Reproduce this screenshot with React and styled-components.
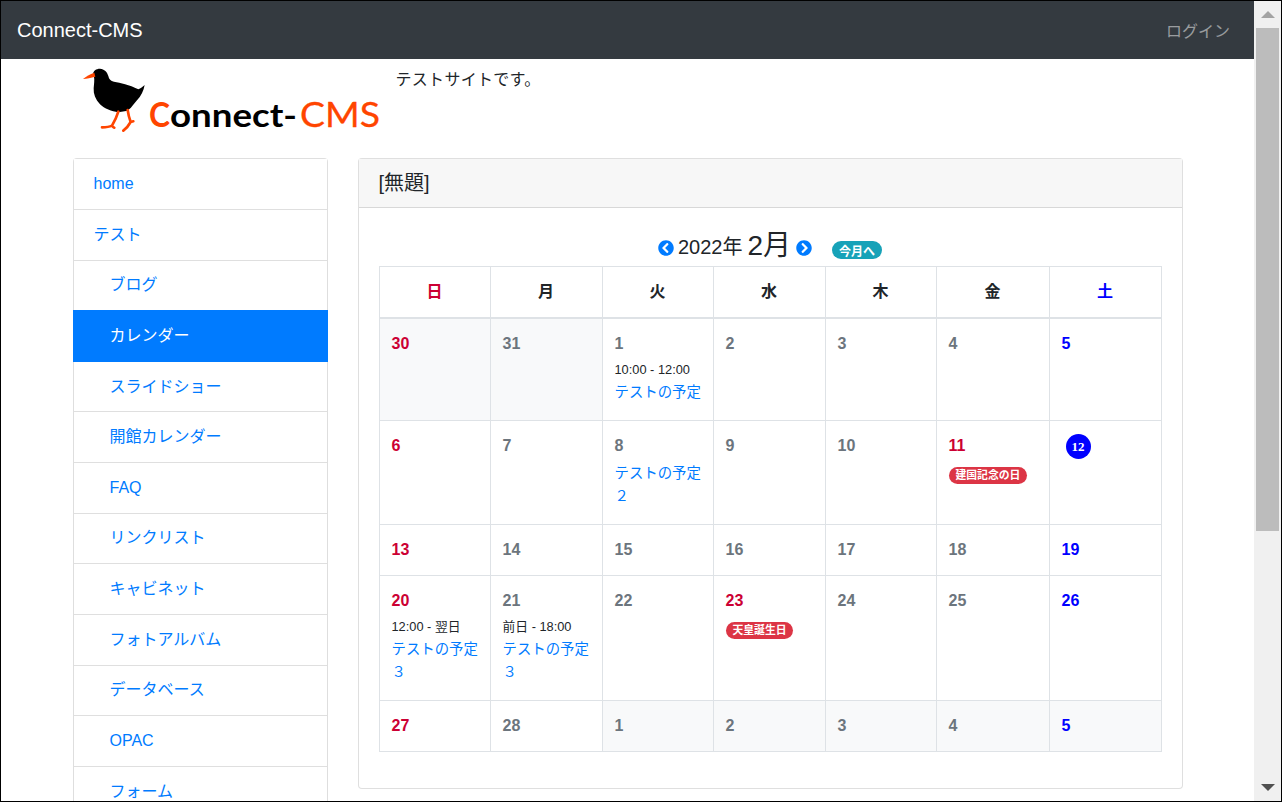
import React from "react";
import styled, { createGlobalStyle } from "styled-components";
import { FaChevronCircleLeft, FaChevronCircleRight } from "react-icons/fa";

const sans = `"Liberation Sans", "Noto Sans CJK JP", sans-serif`;

const Global = createGlobalStyle`
  html, body { margin: 0; padding: 0; overflow: hidden; background: #fff; }
  * { box-sizing: border-box; }
  body { font-family: ${sans}; font-size: 16px; color: #212529; }
`;

const Frame = styled.div`
  width: 1282px; height: 802px; border: 1px solid #000; display: flex; overflow: hidden; background: #fff;
`;
const Page = styled.div`flex: 1; min-width: 0; height: 800px; overflow: hidden;`;

const ScrollTrack = styled.div`
  width: 27px; height: 800px; background: #f0f0f0; display: flex; flex-direction: column; align-items: center; flex: none;
`;
const ArrowBox = styled.div`height: 27px; width: 100%; display: flex; align-items: center; justify-content: center; flex: none;`;
const ArrowUp = styled.div`
  width: 0; height: 0; border-left: 7px solid transparent; border-right: 7px solid transparent; border-bottom: 7px solid #a3a3a3;
`;
const ArrowDown = styled.div`
  width: 0; height: 0; border-left: 7px solid transparent; border-right: 7px solid transparent; border-top: 7px solid #505050;
`;
const Thumb = styled.div`width: 23px; height: 503px; background: #bcbcbc; flex: none;`;
const ScrollGap = styled.div`flex: 1;`;

const NavBar = styled.nav`
  height: 58px; background: #343a40; display: flex; align-items: center; justify-content: space-between; padding: 0 24px 0 16px;
`;
const Brand = styled.a`font-size: 20px; color: #fff;`;
const Login = styled.a`font-size: 16px; color: rgba(255,255,255,.5);`;

const Container = styled.div`width: 1140px; margin: 0 auto; padding: 0 15px;`;
const Masthead = styled.header`height: 99px; display: flex; align-items: flex-start; padding: 6px 0 0 7px;`;
const LogoSvg = styled.svg`display: block; flex: none; width: 300px; height: 70px;`;
const Tagline = styled.p`margin: 3px 0 0 16px; font-size: 16px; line-height: 24px; letter-spacing: .3px;`;

const Columns = styled.div`display: grid; grid-template-columns: 255px 825px; column-gap: 30px; align-items: start;`;

const SideList = styled.ul`
  list-style: none; margin: 0; padding: .25px 0 0; border: 1px solid rgba(0,0,0,.125); border-bottom: 0; border-radius: 4px 4px 0 0;
`;
const SideItem = styled.li`
  height: ${p => (p.$active ? 51.64 : 50.64)}px; display: flex; align-items: center;
  padding-left: ${p => (p.$active ? 37 : p.$sub ? 36 : 20)}px;
  padding-bottom: ${p => (p.$active ? 2 : p.$cjk ? 4 : 0)}px;
  margin: ${p => (p.$active ? "-1px -1px 0" : "0")};
  border-bottom: 1px solid ${p => (p.$active ? "#007bff" : "rgba(0,0,0,.125)")}; font-size: 16px;
  color: ${p => (p.$active ? "#fff" : "#007bff")}; background: ${p => (p.$active ? "#007bff" : "#fff")};
`;

const Card = styled.section`border: 1px solid rgba(0,0,0,.125); border-radius: 4px; background: #fff;`;
const CardHead = styled.div`
  height: 49px; padding: 0 20px; display: flex; align-items: center; font-size: 20px; line-height: 24px;
  background: #f7f7f7; border-bottom: 1px solid rgba(0,0,0,.125);
`;
const CardBody = styled.div`padding: 20px 20px 36px;`;

const MonthBar = styled.div`
  height: 38px; display: flex; justify-content: center; align-items: center; color: #212529;
`;
const MonthIcon = styled.span`display: flex; color: #007bff; font-size: 16px; margin: ${p => p.$m}; padding-top: 2px;`;
const Year = styled.span`font-size: 20px; line-height: 30px; margin-right: 5px;`;
const Month = styled.span`font-size: 28px; line-height: 34px; margin-top: -2px;`;
const TodayBadge = styled.span`
  height: 18px; width: 50px; margin: 6px 0 0 20px; border-radius: 9px; background: #17a2b8; color: #fff; font-size: 12px; font-weight: 700;
  display: flex; align-items: center; justify-content: center;
`;

const Table = styled.table`width: 782px; table-layout: fixed; border-collapse: collapse; font-size: 16px;`;
const HeadCell = styled.th`
  height: 51px; padding: 0 0 4px; text-align: center; vertical-align: middle; font-size: 16px; font-weight: 700;
  border: 1px solid #dee2e6; border-bottom: 2px solid #dee2e6; color: ${p => p.$color};
`;
const Cell = styled.td`
  padding: 13px 12px 13px; vertical-align: top; border: 1px solid #dee2e6; background: ${p => (p.$muted ? "#f8f9fa" : "#fff")};
`;
const DateNum = styled.div`height: 24px; line-height: 24px; font-weight: 700; font-size: 16px; color: ${p => p.$color};`;
const TodayCircle = styled.div`
  width: 25px; height: 25px; margin: 0 0 -1px 4px; border-radius: 50%; background: #0000ff; color: #fff;
  font-family: "Liberation Serif", serif; font-weight: 700; font-size: 13px; line-height: 25px; text-align: center;
`;
const Events = styled.div`margin: 4px 0 3px;`;
const TimeText = styled.div`height: 21px; line-height: 20px; font-size: 12.8px; white-space: nowrap;`;
const EventLink = styled.a`display: block; font-size: 14.4px; line-height: 23px; color: #007bff; margin-right: -2px;`;
const Holiday = styled.span`
  display: inline-block; height: 17px; margin-top: 9px; padding: 0 7px; border-radius: 9px; background: #dc3545; color: #fff;
  font-size: 10.8px; line-height: 17px; font-weight: 700; white-space: nowrap; vertical-align: top;
`;

const colWidths = [111, 112, 111, 112, 111, 113, 112];
const days = ["日", "月", "火", "水", "木", "金", "土"];
const RED = "#cc0033", GRAY = "#6c757d", BLUE = "#0000ff", INK = "#212529";
const headColor = i => (i === 0 ? RED : i === 6 ? BLUE : INK);
const dayColor = (i, d) => (d.holiday ? RED : i === 0 ? RED : i === 6 ? BLUE : GRAY);

const ev = (title, time) => ({ title, time });
const weeks = [
  [{ n: 30, muted: 1 }, { n: 31, muted: 1 }, { n: 1, event: ev("テストの予定", "10:00 - 12:00") }, { n: 2 }, { n: 3 }, { n: 4 }, { n: 5 }],
  [{ n: 6 }, { n: 7 }, { n: 8, event: ev("テストの予定２") }, { n: 9 }, { n: 10 }, { n: 11, holiday: "建国記念の日" }, { n: 12, today: 1 }],
  [{ n: 13 }, { n: 14 }, { n: 15 }, { n: 16 }, { n: 17 }, { n: 18 }, { n: 19 }],
  [{ n: 20, event: ev("テストの予定３", "12:00 - 翌日") }, { n: 21, event: ev("テストの予定３", "前日 - 18:00") }, { n: 22 }, { n: 23, holiday: "天皇誕生日" }, { n: 24 }, { n: 25 }, { n: 26 }],
  [{ n: 27 }, { n: 28 }, { n: 1, muted: 1 }, { n: 2, muted: 1 }, { n: 3, muted: 1 }, { n: 4, muted: 1 }, { n: 5, muted: 1 }],
];
const menu = [
  ["home"], ["テスト", 0, 0, 1], ["ブログ", 1, 0, 1], ["カレンダー", 1, 1, 1], ["スライドショー", 1, 0, 1], ["開館カレンダー", 1, 0, 1], ["FAQ", 1],
  ["リンクリスト", 1, 0, 1], ["キャビネット", 1, 0, 1], ["フォトアルバム", 1, 0, 1], ["データベース", 1, 0, 1], ["OPAC", 1], ["フォーム", 1, 0, 1],
];

const ORANGE = "#ff4500";
const Logo = () => (
  <LogoSvg viewBox="0 0 300 70" aria-label="Connect-CMS">
    <g transform="translate(-10 -5) scale(.3333)">
      <path fill="#000" d="M68 44 C70 32 78 26 90 26 C103 27 112 36 115 48 C117 58 122 63 132 65 C152 69 177 73 205 88 C212 85 218 80 224 75 C221 92 213 108 201 121 C191 133 181 147 173 152 L145 157 C125 154 103 146 90 133 C76 118 70 102 71 85 C72 72 74 60 72 50 Z" />
      <path fill={ORANGE} d="M39 57 C48 49 60 43 73 38 L76 50 C63 53 50 56 39 57 Z" />
      <path fill="none" stroke={ORANGE} strokeWidth="8" strokeLinejoin="round" strokeLinecap="round" d="M145 155 C140 172 133 185 126 197 C118 201 106 202 96 202 M126 197 C128 200 130 202 133 203" />
      <path fill="none" stroke={ORANGE} strokeWidth="8" strokeLinejoin="round" strokeLinecap="round" d="M173 150 C175 165 178 175 182 186 C176 197 168 206 160 212 M182 186 L190 184" />
    </g>
    <text x="69" y="62" textLength="21" lengthAdjust="spacingAndGlyphs" fontFamily="Lato, sans-serif" fontWeight="700" fontSize="34" fill={ORANGE}>C</text>
    <text x="90" y="62" textLength="127" lengthAdjust="spacingAndGlyphs" fontFamily="Lato, sans-serif" fontWeight="700" fontSize="33" fill="#000">onnect-</text>
    <text x="220" y="62" textLength="80" lengthAdjust="spacingAndGlyphs" fontFamily="Lato, sans-serif" fontWeight="400" fontSize="34" stroke={ORANGE} strokeWidth=".3" fill={ORANGE}>CMS</text>
  </LogoSvg>
);

export default function App() {
  return (
    <>
      <Global />
      <Frame>
        <Page>
          <NavBar>
            <Brand>Connect-CMS</Brand>
            <Login>ログイン</Login>
          </NavBar>
          <Container>
            <Masthead>
              <Logo />
              <Tagline>テストサイトです。</Tagline>
            </Masthead>
            <Columns>
              <SideList>
                {menu.map(([t, sub, active, cjk]) => (
                  <SideItem key={t} $sub={sub} $active={active} $cjk={cjk}>{t}</SideItem>
                ))}
              </SideList>
              <Card>
                <CardHead>[無題]</CardHead>
                <CardBody>
                  <MonthBar>
                    <MonthIcon $m="0 4px 0 0"><FaChevronCircleLeft /></MonthIcon>
                    <Year>2022年</Year>
                    <Month>2月</Month>
                    <MonthIcon $m="0 0 0 5px"><FaChevronCircleRight /></MonthIcon>
                    <TodayBadge>今月へ</TodayBadge>
                  </MonthBar>
                  <Table>
                    <colgroup>{colWidths.map((w, i) => <col key={i} width={w} />)}</colgroup>
                    <thead>
                      <tr>{days.map((d, i) => <HeadCell key={d} $color={headColor(i)}>{d}</HeadCell>)}</tr>
                    </thead>
                    <tbody>
                      {weeks.map((w, wi) => (
                        <tr key={wi}>
                          {w.map((d, i) => (
                            <Cell key={i} $muted={d.muted}>
                              {d.today ? <TodayCircle>{d.n}</TodayCircle> : <DateNum $color={dayColor(i, d)}>{d.n}</DateNum>}
                              {d.holiday && <Holiday>{d.holiday}</Holiday>}
                              {d.event && (
                                <Events>
                                  {d.event.time && <TimeText>{d.event.time}</TimeText>}
                                  <EventLink>{d.event.title}</EventLink>
                                </Events>
                              )}
                            </Cell>
                          ))}
                        </tr>
                      ))}
                    </tbody>
                  </Table>
                </CardBody>
              </Card>
            </Columns>
          </Container>
        </Page>
        <ScrollTrack>
          <ArrowBox><ArrowUp /></ArrowBox>
          <Thumb />
          <ScrollGap />
          <ArrowBox><ArrowDown /></ArrowBox>
        </ScrollTrack>
      </Frame>
    </>
  );
}
